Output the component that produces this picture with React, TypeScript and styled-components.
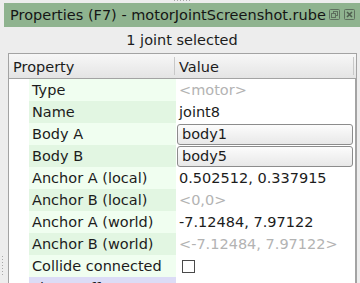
import React from 'react';
import styled, { createGlobalStyle } from 'styled-components';

const GlobalStyle = createGlobalStyle`
  html, body {
    margin: 0;
    padding: 0;
    background: #ededed;
  }
  body {
    font-family: 'DejaVu Sans', 'Liberation Sans', sans-serif;
    font-size: 14.5px;
    color: #1c1c1c;
  }
`;

type Row = {
  name: string;
  value: string;
  kind: 'text' | 'muted' | 'combo' | 'check';
  group?: 'motor';
};

const rows: Row[] = [
  { name: 'Type', value: '<motor>', kind: 'muted' },
  { name: 'Name', value: 'joint8', kind: 'text' },
  { name: 'Body A', value: 'body1', kind: 'combo' },
  { name: 'Body B', value: 'body5', kind: 'combo' },
  { name: 'Anchor A (local)', value: '0.502512, 0.337915', kind: 'text' },
  { name: 'Anchor B (local)', value: '<0,0>', kind: 'muted' },
  { name: 'Anchor A (world)', value: '-7.12484, 7.97122', kind: 'text' },
  { name: 'Anchor B (world)', value: '<-7.12484, 7.97122>', kind: 'muted' },
  { name: 'Collide connected', value: '', kind: 'check' },
  { name: 'Linear offset', value: '0, 0', kind: 'text', group: 'motor' },
];

export default function App() {
  return (
    <>
      <GlobalStyle />
      <Dock>
        <TopGrip />
        <TitleBar>
          <TitleText>Properties (F7) - motorJointScreenshot.rube</TitleText>
          <TitleButtons>
            <TitleButton aria-label="float">
              <svg width="11" height="11" viewBox="0 0 11 11">
                <rect x="0.5" y="0.5" width="10" height="10" rx="1" fill="none" stroke="#5f6f5f" />
                <rect x="4.5" y="2.5" width="4" height="4" fill="none" stroke="#5f6f5f" />
                <rect x="2.5" y="4.5" width="4" height="4" fill="#8fb28f" stroke="#5f6f5f" />
              </svg>
            </TitleButton>
            <TitleButton aria-label="close">
              <svg width="11" height="11" viewBox="0 0 11 11">
                <rect x="0.5" y="0.5" width="10" height="10" rx="1" fill="none" stroke="#5f6f5f" />
                <path d="M3 3 L8 8 M8 3 L3 8" stroke="#4f5f4f" strokeWidth="1.6" />
              </svg>
            </TitleButton>
          </TitleButtons>
        </TitleBar>
        <Caption>1 joint selected</Caption>
        <Body>
          <SideGutter>
            <SideGrip />
          </SideGutter>
          <Table>
            <HeaderRow>
              <HeaderCell>Property</HeaderCell>
              <HeaderCell $last>Value</HeaderCell>
            </HeaderRow>
            {rows.map((row, i) => (
              <DataRow key={row.name}>
                <NameCell $shade={row.group === 'motor' ? 'motor' : i % 2 === 0 ? 'light' : 'dark'}>
                  {row.name}
                </NameCell>
                <ValueCell>
                  {row.kind === 'combo' && <Combo>{row.value}</Combo>}
                  {row.kind === 'check' && <CheckBox />}
                  {(row.kind === 'text' || row.kind === 'muted') && (
                    <ValueText $muted={row.kind === 'muted'}>{row.value}</ValueText>
                  )}
                </ValueCell>
              </DataRow>
            ))}
          </Table>
        </Body>
      </Dock>
    </>
  );
}

const Dock = styled.div`
  width: 360px;
  height: 283px;
  overflow: hidden;
  display: flex;
  flex-direction: column;
  background: #ededed;
`;

const TopGrip = styled.div`
  height: 3px;
  margin-left: 173px;
  width: 18px;
  background-image: radial-gradient(circle, #a8a8a8 0.6px, transparent 0.8px);
  background-size: 3px 3px;
  background-position: 0 -1px;
  flex: none;
`;

const TitleBar = styled.div`
  position: relative;
  height: 24px;
  margin-left: 4px;
  background: #8fb38f;
  display: flex;
  align-items: center;
  padding-left: 6px;
  flex: none;
`;

const TitleText = styled.span`
  white-space: nowrap;
  overflow: hidden;
  color: #151515;
`;

const TitleButtons = styled.div`
  position: absolute;
  right: 5px;
  top: 6px;
  display: flex;
  gap: 4px;
`;

const TitleButton = styled.div`
  width: 11px;
  height: 11px;
  display: flex;
`;

const Caption = styled.div`
  height: 26px;
  display: flex;
  align-items: center;
  justify-content: center;
  padding-left: 4px;
  flex: none;
`;

const Body = styled.div`
  display: flex;
  flex: 1;
  min-height: 0;
`;

const SideGutter = styled.div`
  width: 8px;
  flex: none;
  display: flex;
  align-items: flex-end;
  padding-bottom: 6px;
`;

const SideGrip = styled.div`
  width: 3px;
  height: 22px;
  margin-left: 1px;
  background-image: radial-gradient(circle, #a8a8a8 0.6px, transparent 0.8px);
  background-size: 3px 3px;
`;

const Table = styled.div`
  width: 347px;
  border: 1px solid #a3a3a3;
  border-bottom: none;
  background: #ffffff;
  display: flex;
  flex-direction: column;
`;

const HeaderRow = styled.div`
  height: 24px;
  display: grid;
  grid-template-columns: 166px 1fr;
  background: linear-gradient(#f7f7f7, #e4e4e4);
  border-bottom: 1px solid #a3a3a3;
  flex: none;
`;

const HeaderCell = styled.div<{ $last?: boolean }>`
  display: flex;
  align-items: center;
  padding-left: 4px;
  border-right: 1px solid #c8c8c8;
  margin: 3px 0;
  margin-right: ${(p) => (p.$last ? '2px' : '0')};
  padding-top: 1px;
`;

const DataRow = styled.div`
  height: 22px;
  display: grid;
  grid-template-columns: 167px 1fr;
  flex: none;
`;

const shades = {
  light: '#f0fef0',
  dark: '#e2f6e2',
  motor: '#dcdcf6',
};

const NameCell = styled.div<{ $shade: keyof typeof shades }>`
  margin-left: 20px;
  background: ${(p) => shades[p.$shade]};
  display: flex;
  align-items: center;
  padding-left: 3px;
  white-space: nowrap;
  overflow: hidden;
`;

const ValueCell = styled.div`
  display: flex;
  align-items: center;
  padding-left: 3px;
  padding-right: 2px;
  white-space: nowrap;
  border-right: 1px solid #a3a3a3;
`;

const ValueText = styled.span<{ $muted: boolean }>`
  color: ${(p) => (p.$muted ? '#b3b3b3' : '#1c1c1c')};
`;

const Combo = styled.div`
  flex: 1;
  height: 19px;
  margin-left: -2px;
  border: 1px solid #8c8c8c;
  border-radius: 3px;
  background: linear-gradient(#fcfcfc, #e8e8e8);
  display: flex;
  align-items: center;
  padding-left: 4px;
`;

const CheckBox = styled.div`
  width: 11px;
  height: 11px;
  margin-left: 3px;
  border: 1px solid #4a4a4a;
  background: #ffffff;
`;
